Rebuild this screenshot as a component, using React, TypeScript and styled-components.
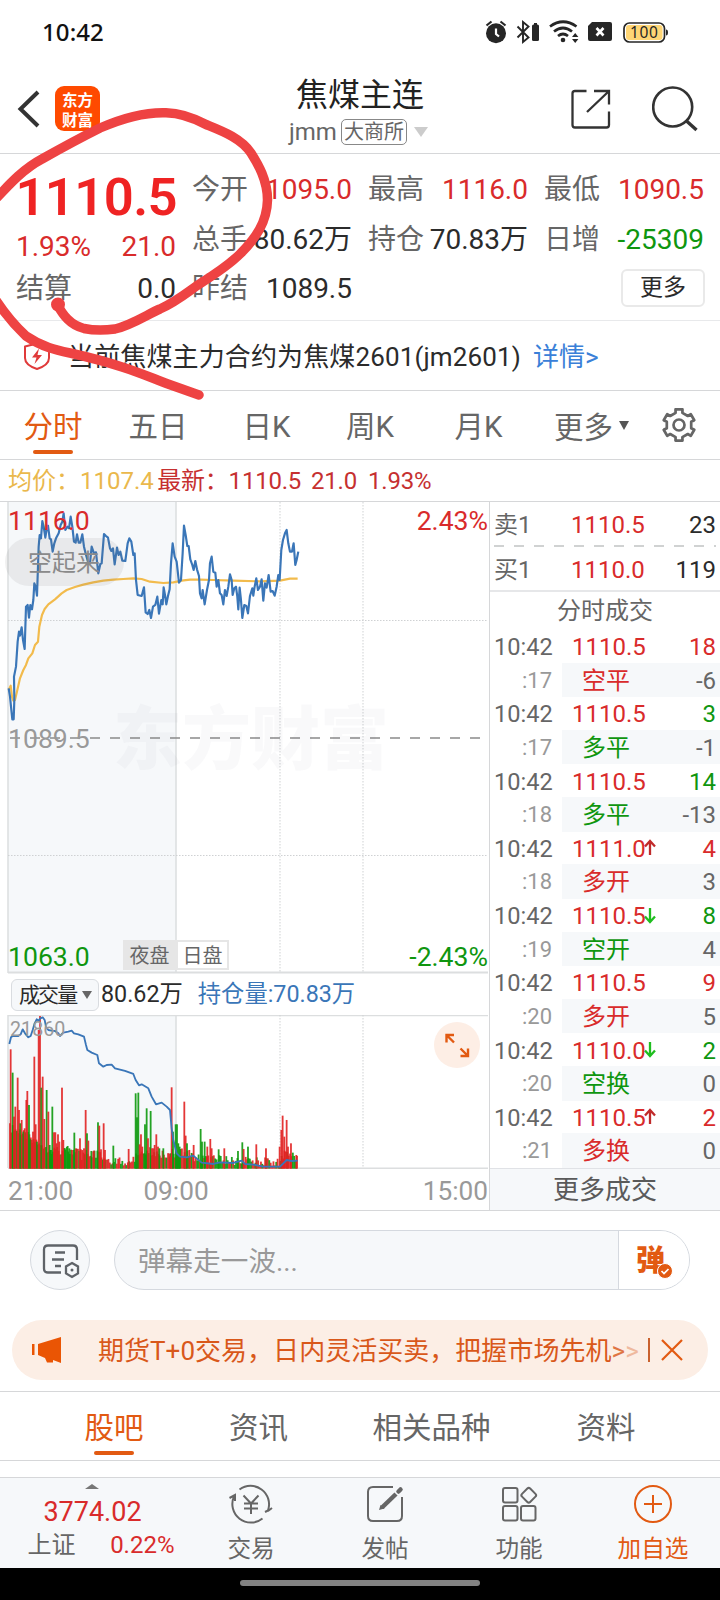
import React from 'react';
import styled, { createGlobalStyle, css } from 'styled-components';

const RED = '#d92b2b';
const GREEN = '#0f960f';
const BLUE = '#3a76b8';
const ORANGE = '#e25a12';
const GREY = '#666';
const MUTED = '#999';
const INK = '#2b2b2b';
const LINE = '#d6d7d9';
const PANEL = '#f6f8fa';

const Global = createGlobalStyle`
  * { box-sizing: border-box; }
  body { margin: 0; background: #fff; }
  #root { font-family: Roboto, "Noto Sans CJK SC", sans-serif; color: ${INK}; }
`;

const Screen = styled.div`
  position: relative;
  width: 720px;
  height: 1600px;
  overflow: hidden;
  background: #fff;
  display: flex;
  flex-direction: column;
  white-space: nowrap;
`;

/* ---------- status bar ---------- */
const StatusBar = styled.div`
  height: 64px;
  flex: none;
  display: flex;
  align-items: center;
  justify-content: space-between;
  padding: 0 50px 0 42px;
`;
const Clock = styled.span`
  font: 500 24px/30px "Noto Sans", sans-serif;
  color: #111;
  letter-spacing: 0.1px;
`;

/* ---------- header ---------- */
const Header = styled.header`
  height: 90px;
  flex: none;
  display: grid;
  grid-template-columns: 280px 160px 280px;
  border-bottom: 1px solid ${LINE};
`;
const HeaderLeft = styled.div`
  display: flex;
  align-items: flex-start;
  padding: 22px 0 0 16px;
  gap: 13px;
`;
const Logo = styled.div`
  width: 45px;
  height: 45px;
  border-radius: 9px;
  background: #ff4a00;
  color: #fff;
  display: flex;
  flex-direction: column;
  align-items: center;
  padding-top: 3px;
`;
const LogoLine = styled.span`
  font: 700 15.5px/20px "Noto Sans CJK SC", sans-serif;
  height: 19.5px;
`;
const Titles = styled.div`
  display: flex;
  flex-direction: column;
  align-items: center;
`;
const Title = styled.h1`
  margin: 11px 0 0;
  font-weight: 400;
  font-size: 32px;
  line-height: 40px;
  color: #222;
`;
const SubTitle = styled.div`
  display: flex;
  align-items: center;
  height: 28px;
  margin-top: 3px;
  font-size: 24px;
  line-height: 30px;
  color: ${GREY};
  margin-left: -3px;
`;
const Exchange = styled.span`
  height: 26px;
  width: 66px;
  text-align: center;
  margin: 0 7px 0 4px;
  border: 1.5px solid #888;
  border-radius: 5px;
  font-size: 20px;
  line-height: 25px;
`;
const HeaderRight = styled.div`
  display: flex;
  justify-content: flex-end;
  align-items: flex-start;
  gap: 39px;
  padding: 21px 20px 0 0;
`;

/* ---------- quote ---------- */
const Quote = styled.section`
  height: 167px;
  flex: none;
  display: grid;
  grid-template-columns: repeat(4, 160px);
  column-gap: 16px;
  padding: 11px 16px 0;
  border-bottom: 1px solid #e8e9eb;
`;
const QuoteCol = styled.div`
  display: flex;
  flex-direction: column;
`;
const QuoteRow = styled.div`
  height: 49.7px;
  display: flex;
  justify-content: space-between;
  align-items: center;
  font-size: 28px;
  line-height: 50px;
`;
const Label = styled.span`
  color: ${GREY};
`;
const Value = styled.span<{ $c?: string }>`
  color: ${(p) => p.$c || INK};
`;
const BigPrice = styled.div`
  height: 65px;
  font-size: 52.6px;
  font-weight: 600;
  letter-spacing: -0.6px;
  line-height: 65px;
  color: #ef2323;
  display: flex;
  justify-content: flex-end;
  margin-right: -1px;
`;
const ChangeRow = styled(QuoteRow)`
  height: 34.4px;
`;
const MoreButton = styled.button`
  width: 84px;
  height: 38px;
  margin: 5px -1px 0 auto;
  padding: 0;
  border: 2px solid #e9e9e9;
  border-radius: 6px;
  background: #fff;
  color: ${INK};
  font: 23px/32px Roboto, "Noto Sans CJK SC", sans-serif;
`;

/* ---------- notice ---------- */
const Notice = styled.section`
  height: 70px;
  flex: none;
  display: flex;
  align-items: center;
  padding-left: 23px;
  font-size: 26px;
  line-height: 72px;
  border-bottom: 1px solid ${LINE};
`;
const NoticeText = styled.span`
  margin-left: 17px;
  padding-top: 2px;
  letter-spacing: 0.13px;
`;
const DetailLink = styled.a`
  margin-left: 12px;
  padding-top: 2px;
  color: #3a80d8;
`;

/* ---------- tabs ---------- */
const TabBar = styled.nav<{ $cols: string }>`
  height: 69px;
  flex: none;
  display: grid;
  grid-template-columns: ${(p) => p.$cols};
  border-bottom: 1px solid ${LINE};
`;
const Tab = styled.div<{ $on?: boolean }>`
  display: flex;
  flex-direction: column;
  align-items: center;
  font-size: 29.5px;
  line-height: 58px;
  padding-top: 7px;
  height: 68px;
  color: ${(p) => (p.$on ? ORANGE : GREY)};
  ${(p) =>
    p.$on &&
    css`
      &::after {
        content: '';
        width: 40px;
        height: 4px;
        margin-top: -6px;
        border-radius: 2px;
        background: ${ORANGE};
      }
    `}
`;
const MoreTab = styled(Tab)`
  flex-direction: row;
  align-items: center;
  padding: 5px 0 0 14px;
  gap: 6px;
  & > svg { margin-top: -4px; }
`;
const IconCell = styled.div`
  display: flex;
  align-items: center;
`;

/* ---------- summary line ---------- */
const Summary = styled.div`
  height: 42px;
  flex: none;
  display: flex;
  padding-left: 8px;
  font-size: 24px;
  line-height: 42px;
  color: #c63030;
  border-bottom: 1px solid ${LINE};
`;
const SummaryItem = styled.span<{ $c?: string; $gap?: number }>`
  color: ${(p) => p.$c || 'inherit'};
  margin-left: ${(p) => p.$gap || 0}px;
  letter-spacing: ${(p) => (p.$c ? 0 : -0.22)}px;
`;

/* ---------- chart area ---------- */
const Market = styled.section`
  height: 709px;
  flex: none;
  display: grid;
  grid-template-columns: 489px 231px;
  grid-template-rows: 708px;
  border-bottom: 1px solid ${LINE};
`;
const ChartCol = styled.div`
  display: flex;
  flex-direction: column;
`;
const PriceChart = styled.div`
  position: relative;
  height: 472px;
`;
const VolumeChart = styled.div`
  position: relative;
  height: 154px;
`;
const Overlay = styled.span<{ $x?: number; $r?: number; $y: number; $c: string; $s?: number }>`
  position: absolute;
  ${(p) => (p.$r !== undefined ? `right: ${p.$r}px;` : `left: ${p.$x}px;`)}
  top: ${(p) => p.$y}px;
  font-size: ${(p) => p.$s || 26.6}px;
  line-height: 30px;
  color: ${(p) => p.$c};
`;
const Watermark = styled.span`
  position: absolute;
  left: 113px;
  top: 182px;
  font: 900 69px/100px "Noto Sans CJK SC", sans-serif;
  color: rgba(80, 90, 110, 0.035);
`;
const BarragePill = styled.span`
  position: absolute;
  left: 5px;
  top: 36px;
  width: 119px;
  height: 48px;
  border-radius: 24px;
  background: rgba(110, 110, 110, 0.1);
  color: #8a8a8a;
  font-size: 24px;
  line-height: 51px;
  padding-left: 23px;
`;
const Sessions = styled.div`
  position: absolute;
  left: 123px;
  top: 438px;
  display: flex;
`;
const Session = styled.span<{ $fill?: boolean }>`
  width: 53px;
  height: 30px;
  text-align: center;
  font-size: 20px;
  line-height: 28px;
  color: ${GREY};
  border: 2px solid #e6e6e6;
  background: ${(p) => (p.$fill ? '#e6e6e6' : '#fff')};
`;
const VolumeHead = styled.div`
  height: 41px;
  display: flex;
  align-items: center;
  padding-left: 11px;
  font-size: 23.3px;
  line-height: 38px;
`;
const Picker = styled.div`
  width: 88px;
  height: 32px;
  display: flex;
  align-items: center;
  justify-content: space-between;
  padding: 0 6px 0 7px;
  border: 1.5px solid #d9dce0;
  border-radius: 6px;
  background: ${PANEL};
  font-size: 21px;
  letter-spacing: -1.9px;
`;
const VolumeText = styled.span<{ $c?: string; $gap: number }>`
  margin-left: ${(p) => p.$gap}px;
  padding-bottom: 2px;
  color: ${(p) => p.$c || INK};
`;
const TimeAxis = styled.div`
  height: 41px;
  display: grid;
  grid-template-columns: 88px 160px 1fr;
  padding: 0 1px 0 8px;
  font-size: 26.2px;
  line-height: 44px;
  color: ${MUTED};
  & > :nth-child(2) { text-align: center; }
  & > :nth-child(3) { text-align: right; }
`;
const ExpandButton = styled.div`
  position: absolute;
  left: 434px;
  top: 7px;
  width: 46px;
  height: 46px;
  border-radius: 50%;
  background: #fdeee5;
`;

/* ---------- order book and trades ---------- */
const BookCol = styled.aside`
  border-left: 1px solid ${LINE};
  display: flex;
  flex-direction: column;
  font-size: 24px;
`;
const BookRow = styled.div`
  height: 43px;
  display: grid;
  grid-template-columns: 77px 1fr auto;
  padding: 0 4px;
  line-height: 46px;
`;
const Dash = styled.div`
  height: 2px;
  margin: 0 4px;
  background: repeating-linear-gradient(90deg, #d0d2d2 0 10px, transparent 10px 20px);
`;
const BookTitle = styled.div`
  height: 40px;
  border-top: 2px solid #e6e7e9;
  text-align: center;
  line-height: 38px;
  color: ${GREY};
`;
const Trade = styled.div`
  height: 67.25px;
  display: grid;
  grid-template-columns: 72px 1fr;
  grid-template-rows: 32.65px 34.6px;
  line-height: 34px;
`;
const TradeTime = styled.span`
  padding-left: 4px;
  font-size: 23.6px;
  line-height: 34px;
  color: ${GREY};
`;
const TradeSecond = styled.span`
  padding-right: 10px;
  text-align: right;
  font-size: 22px;
  line-height: 35px;
  color: ${MUTED};
`;
const TradePrice = styled.span`
  display: flex;
  align-items: center;
  height: 34px;
  padding: 0 4px 0 10px;
  color: ${RED};
`;
const TradeKind = styled.span<{ $c: string }>`
  display: flex;
  justify-content: space-between;
  line-height: 36px;
  padding: 0 4px 0 20px;
  background: ${PANEL};
  color: ${(p) => p.$c};
`;
const Count = styled.span<{ $c: string }>`
  margin-left: auto;
  color: ${(p) => p.$c};
`;
const MoreTrades = styled.div`
  flex: 1;
  border-top: 1px solid #e0e2e6;
  background: ${PANEL};
  text-align: center;
  font-size: 26px;
  line-height: 39px;
  padding-top: 2px;
  color: #5a5a5a;
`;

/* ---------- barrage ---------- */
const Barrage = styled.section`
  height: 109px;
  flex: none;
  display: flex;
  padding: 19px 30px 0;
  gap: 24px;
`;
const RoundButton = styled.div`
  width: 60px;
  height: 60px;
  border: 1px solid #d5d9df;
  border-radius: 50%;
  background: ${PANEL};
`;
const BarrageInput = styled.div`
  width: 576px;
  height: 60px;
  display: flex;
  border: 1px solid #d5d9df;
  border-radius: 30px;
  overflow: hidden;
  background: ${PANEL};
`;
const Placeholder = styled.span`
  flex: 1;
  padding-left: 23px;
  font-size: 27.6px;
  line-height: 62px;
  color: ${MUTED};
`;
const BarrageToggle = styled.span`
  position: relative;
  width: 71px;
  border-left: 1px solid #d5d9df;
  background: #fff;
  color: ${ORANGE};
  font: 900 29px/55px "Noto Sans CJK SC", sans-serif;
  padding-left: 17px;
`;
const CheckBadge = styled.svg`
  position: absolute;
  left: 38px;
  top: 32px;
`;

/* ---------- banner ---------- */
const Banner = styled.section`
  height: 60px;
  flex: none;
  display: flex;
  align-items: center;
  margin: 0 12px 11px;
  padding: 0 25px 0 18px;
  border-radius: 30px;
  background: #fceee5;
  color: #d9581a;
  font-size: 26px;
  line-height: 62px;
`;
const BannerText = styled.span`
  margin-left: 34px;
  width: 542px;
  letter-spacing: 0.03px;
  padding-top: 1px;
`;
const Fade = styled.span<{ $o: number }>`
  opacity: ${(p) => p.$o};
`;
const BannerDivider = styled.span`
  width: 1.5px;
  height: 24px;
  margin: 0 11px 0 8px;
  background: #c9612e;
`;

/* ---------- bottom ---------- */
const LowerTabs = styled(TabBar)`
  height: 70px;
  border-top: 1px solid ${LINE};
`;
const BottomNav = styled.nav`
  height: 91px;
  flex: none;
  margin-top: 16px;
  display: grid;
  grid-template-columns: 184px 134px 134px 134px 134px;
  border-top: 1px solid ${LINE};
  background: ${PANEL};
`;
const IndexCell = styled.div`
  display: flex;
  flex-direction: column;
  align-items: center;
  color: ${RED};
`;
const Caret = styled.svg`
  margin-top: 6px;
`;
const IndexValue = styled.div`
  font-size: 27px;
  line-height: 34px;
  margin: 6px 0 0 1px;
`;
const IndexChange = styled.div`
  display: flex;
  justify-content: space-between;
  width: 147px;
  margin: 0 0 0 18px;
  font-size: 24px;
  line-height: 33px;
`;
const NavItem = styled.div<{ $c?: string }>`
  display: flex;
  flex-direction: column;
  align-items: center;
  padding-top: 4px;
  font-size: 23.6px;
  line-height: 46px;
  color: ${(p) => p.$c || GREY};
`;
const GestureBar = styled.div`
  height: 32px;
  flex: none;
  background: #000;
  display: flex;
  justify-content: center;
  padding-top: 12px;
  &::after {
    content: '';
    width: 240px;
    height: 6px;
    border-radius: 3px;
    background: #828282;
  }
`;
const Marker = styled.svg`
  position: absolute;
  left: 0;
  top: 0;
  pointer-events: none;
`;

/* Price and open-interest series, in thirds of a pixel. */
const PRICE =
  '26,595 30,620 33,650 37,688 41,688 43,630 42,560 48,530 53,455 57,425 60,437 65,412 69,450 74,477 78,350 83,345 87,383 91,345 96,358 100,330 103,280 107,290 111,317 116,170 119,135 123,145 127,93 131,110 136,143 140,118 144,107 149,145 153,148 158,185 163,160 168,145 176,130 182,105 187,95 191,70 196,120 202,110 207,115 212,80 217,110 222,155 227,158 231,133 236,158 241,158 247,133 252,170 258,195 264,215 270,220 275,170 282,190 288,187 295,250 301,222 305,220 312,132 318,138 324,143 330,175 334,183 339,175 344,223 351,173 356,195 361,185 367,212 376,213 383,160 388,145 394,155 400,195 404,190 408,270 413,315 425,318 432,292 437,367 443,372 448,360 453,384 459,350 466,345 472,320 477,371 484,330 488,343 491,292 495,315 499,343 504,318 509,298 513,220 518,160 524,200 530,215 537,278 543,270 548,190 552,107 557,135 562,168 566,168 571,208 577,225 581,240 586,213 591,238 597,258 600,310 605,325 608,300 614,343 621,300 627,270 630,220 635,200 640,245 646,248 650,290 655,270 660,310 665,315 670,343 675,300 680,318 685,290 690,253 695,270 698,315 703,295 708,290 712,320 715,358 719,293 723,330 727,384 733,345 739,348 744,370 750,318 757,295 760,317 764,290 769,265 774,300 780,290 785,268 790,332 795,280 800,293 806,255 812,305 818,303 824,317 830,290 835,255 839,270 844,180 849,150 855,130 860,120 865,160 870,185 876,185 881,160 886,225 890,210 895,185';
const AVERAGE =
  '26,600 32,587 36,620 40,632 45,630 52,600 60,565 70,540 78,525 85,505 97,490 105,465 114,455 118,410 126,375 134,357 145,343 165,328 185,310 200,300 225,291 250,284 280,277 310,272 340,269 370,267 400,265 425,267 450,275 490,279 520,277 545,272 570,269 600,269 640,270 700,272 780,274 840,272 870,266 893,266';
const INTEREST =
  '28,342 33,322 38,318 55,318 62,313 68,298 75,310 85,322 92,318 98,300 104,280 110,268 116,272 121,265 128,262 134,270 138,290 145,300 155,302 165,303 175,310 180,318 190,308 205,305 215,302 222,310 235,313 252,320 258,345 262,360 275,368 292,375 297,400 310,410 320,405 335,404 345,415 375,423 400,432 407,450 417,466 425,463 445,475 455,500 468,523 485,518 500,530 510,540 515,595 520,630 530,670 540,680 560,682 580,677 605,698 640,702 660,697 700,699 725,692 735,702 760,704 790,710 840,710 850,700 860,690 875,693 893,692';

const SPIKES =
  'r32,358 g38,428 r42,560 r46,530 r53,443 r57,540 g61,580 r65,570 g70,605 r74,595 r79,510 r82,483 g87,525 g91,628 r95,630 r99,605 r103,380 r107,583 g111,635 r116,300 r120,258 g124,473 r128,440 r133,567 g140,480 r145,545 g149,645 g153,660 g157,530 r162,607 r166,607 r170,640 r174,613 r178,635 r186,473 r190,630 g195,655 g203,648 g208,655 r216,660 g223,608 r228,655 r240,625 r245,690 r252,655 r257,540 g261,610 r265,632 g274,663 r282,662 g294,577 r298,587 r303,658 r311,580 r315,660 g340,647 r386,657 g407,490 g411,562 g415,488 r419,643 r423,613 r427,650 g435,583 g440,535 r444,625 g452,543 r456,655 r460,655 r464,645 r469,613 r474,650 g478,655 g490,655 r510,680 r515,472 g519,605 g527,583 g531,583 g535,640 g539,650 r553,515 r557,617 g561,640 r568,660 r581,645 g602,597 g606,635 g614,635 r622,650 r631,627 r635,655 g656,658 r673,655 g714,663 g727,637 r731,657 g744,650 r769,643 r798,655 r839,650 r844,600 r848,557 r853,620 r860,570 r864,650 r873,640 r889,675';
const spikes = SPIKES.split(' ').map((s) => {
  const [x, y] = s.slice(1).split(',').map(Number);
  return { x, y, up: s[0] === 'r' };
});

const FLOOR: [number, number][] = [
  [28, 590], [90, 620], [150, 655], [200, 660], [290, 672], [350, 693], [400, 690], [425, 655],
  [480, 668], [540, 665], [600, 682], [700, 690], [835, 695], [860, 660], [896, 690],
];
const floorAt = (x: number) => {
  const i = Math.max(1, FLOOR.findIndex((p) => p[0] >= x));
  const [x0, y0] = FLOOR[i - 1];
  const [x1, y1] = FLOOR[i];
  return y0 + ((y1 - y0) * (x - x0)) / (x1 - x0);
};
const floorBars = Array.from({ length: 208 }, (_, i) => {
  const x = 30 + i * 4.16;
  const n = Math.abs(Math.sin(i * 12.9898) * 43758.5453) % 1;
  const m = Math.abs(Math.sin(i * 78.233) * 12543.123) % 1;
  const upShare = x > 190 && x < 240 ? 0.3 : x > 520 && x < 620 ? 0.35 : 0.6;
  return { x, y: floorAt(x) + (n - 0.4) * 28, up: m < upShare };
});
const bars = [...floorBars, ...spikes];

const trades: [string, string, string, string, boolean, string, boolean, string][] = [
  ['17', '1110.5', '', '18', true, '空平', true, '-6'],
  ['17', '1110.5', '', '3', false, '多平', false, '-1'],
  ['18', '1110.5', '', '14', false, '多平', false, '-13'],
  ['18', '1111.0', 'up', '4', true, '多开', true, '3'],
  ['19', '1110.5', 'down', '8', false, '空开', false, '4'],
  ['20', '1110.5', '', '9', true, '多开', true, '5'],
  ['20', '1110.0', 'down', '2', false, '空换', false, '0'],
  ['21', '1110.5', 'up', '2', true, '多换', true, '0'],
];

const ArrowIcon = styled.svg`
  margin: -2px 0 0 -2px;
`;
const Arrow = ({ dir }: { dir: string }) =>
  dir ? (
    <ArrowIcon width="12" height="17" viewBox="0 0 12 17" fill="none" strokeWidth="2.300"
      stroke={dir === 'up' ? '#c02a2a' : '#1fbe1f'}>
      <path d={dir === 'up' ? 'M6 16V2M1 7.500 6 2l5 5.500' : 'M6 1v14M1 9.500 6 15l5-5.500'} />
    </ArrowIcon>
  ) : null;

const Triangle = ({ w, h, c }: { w: number; h: number; c: string }) => (
  <svg width={w} height={h} viewBox="0 0 10 10" preserveAspectRatio="none">
    <path d="M0 0h10L5 10z" fill={c} />
  </svg>
);

const StatusGlyphs = () => (
  <svg width="186" height="26" viewBox="484 19 186 26" fill="#262626">
    <circle cx="496" cy="33.300" r="10" />
    <path d="M486.500 25.500l5-4M505.500 25.500l-5-4" stroke="#262626" strokeWidth="2.200" />
    <path d="M496 28.500v5.500l3 2.500" stroke="#fff" strokeWidth="2.200" fill="none" />
    <path d="M517.500 26.500l11 11-5.500 4.500V22l5.500 4.500-11 11" fill="none" stroke="#262626" strokeWidth="1.900" />
    <rect x="532" y="24.500" width="7" height="16.500" rx="1.500" />
    <rect x="534" y="23" width="3" height="3" />
    <g fill="none" stroke="#262626" strokeWidth="2.700">
      <path d="M550 26.500q13-9.500 26.500 0" />
      <path d="M554 31.500q9-7 18 0" />
      <path d="M558 36q5-4 10 0" />
    </g>
    <circle cx="563" cy="40" r="2.300" />
    <path d="M572 37l3.200-4 3.200 4zM572 39l3.200 4 3.200-4z" />
    <path d="M592 22h18q2 0 2 2v15q0 2-2 2h-20q-2 0-2-2V26z" />
    <path d="M596.500 28l7 7.500M603.500 28l-7 7.500" stroke="#fff" strokeWidth="2.600" />
    <rect x="624" y="23" width="40.500" height="19" rx="5.500" fill="#fff" stroke="#262626" strokeWidth="1.700" />
    <rect x="626" y="25" width="36.500" height="15" rx="3" fill="#ffd675" />
    <path d="M666 29.500q2 0 2 3t-2 3z" />
    <text x="644.300" y="38" fontFamily="Noto Sans, sans-serif" fontSize="15.500" letterSpacing="0.700" textAnchor="middle">100</text>
  </svg>
);

const gearPath = (() => {
  const pts: string[] = [];
  for (let i = 0; i < 6; i++) {
    const a = (i * Math.PI) / 3 - Math.PI / 2;
    [[-0.27, 12.6], [-0.22, 16], [0.22, 16], [0.27, 12.6]].forEach(([d, r]) =>
      pts.push(`${(18 + r * Math.cos(a + d)).toFixed(1)} ${(18 + r * Math.sin(a + d)).toFixed(1)}`),
    );
  }
  return `M${pts.join('L')}Z`;
})();

export default function App() {
  return (
    <Screen>
      <Global />
      <StatusBar>
        <Clock>10:42</Clock>
        <StatusGlyphs />
      </StatusBar>

      <Header>
        <HeaderLeft>
          <svg width="26" height="46" viewBox="16 86 26 46" fill="none" stroke="#333" strokeWidth="4">
            <path d="M38 92 20.500 109 38 126" />
          </svg>
          <Logo><LogoLine>东方</LogoLine><LogoLine>财富</LogoLine></Logo>
        </HeaderLeft>
        <Titles>
          <Title>焦煤主连</Title>
          <SubTitle>
            jmm<Exchange>大商所</Exchange>
            <Triangle w={14} h={10} c="#ccc" />
          </SubTitle>
        </Titles>
        <HeaderRight>
          <svg width="46" height="48" viewBox="568 85 46 48" fill="none" stroke="#333" strokeWidth="2.300">
            <path d="M587.500 91H576q-2.500 0-2.500 2.500v31.500q0 2.500 2.500 2.500h31.500q2.500 0 2.500-2.500v-13.500M595 91h15v13.500M609.500 91.500 588 112" />
          </svg>
          <svg width="48" height="48" viewBox="652 85 48 48" fill="none" stroke="#333">
            <circle cx="672.700" cy="107" r="19.500" strokeWidth="2.600" />
            <path d="M686 120.500l10.500 9.500" strokeWidth="3.400" />
          </svg>
        </HeaderRight>
      </Header>

      <Quote>
        <QuoteCol>
          <BigPrice>1110.5</BigPrice>
          <ChangeRow><Value $c={RED}>1.93%</Value><Value $c={RED}>21.0</Value></ChangeRow>
          <QuoteRow><Label>结算</Label><Value>0.0</Value></QuoteRow>
        </QuoteCol>
        <QuoteCol>
          <QuoteRow><Label>今开</Label><Value $c={RED}>1095.0</Value></QuoteRow>
          <QuoteRow><Label>总手</Label><Value>80.62万</Value></QuoteRow>
          <QuoteRow><Label>昨结</Label><Value>1089.5</Value></QuoteRow>
        </QuoteCol>
        <QuoteCol>
          <QuoteRow><Label>最高</Label><Value $c={RED}>1116.0</Value></QuoteRow>
          <QuoteRow><Label>持仓</Label><Value>70.83万</Value></QuoteRow>
        </QuoteCol>
        <QuoteCol>
          <QuoteRow><Label>最低</Label><Value $c={RED}>1090.5</Value></QuoteRow>
          <QuoteRow><Label>日增</Label><Value $c={GREEN}>-25309</Value></QuoteRow>
          <MoreButton>更多</MoreButton>
        </QuoteCol>
      </Quote>

      <Notice>
        <svg width="28" height="30" viewBox="0 0 28 30" fill="none" stroke="#e03a3a" strokeWidth="2">
          <path d="M14 2.500 26 5.500V17c0 5-6 9-12 11C8 26 2 22 2 17V5.500z" strokeLinejoin="round" />
          <path d="M16 7.500l-7 9h4.500l-2 6.500 7.500-9h-4.500z" fill="#e03a3a" stroke="none" />
        </svg>
        <NoticeText>当前焦煤主力合约为焦煤2601(jm2601)</NoticeText>
        <DetailLink>详情&gt;</DetailLink>
      </Notice>

      <TabBar $cols="106px 104px 113px 94px 123px 121px 59px">
        <Tab $on>分时</Tab>
        <Tab>五日</Tab>
        <Tab>日K</Tab>
        <Tab>周K</Tab>
        <Tab>月K</Tab>
        <MoreTab>更多<Triangle w={10} h={9} c="#555" /></MoreTab>
        <IconCell>
          <svg width="36" height="36" viewBox="0 0 36 36" fill="none" stroke="#666" strokeWidth="2.700" strokeLinejoin="round">
            <path d={gearPath} />
            <circle cx="18" cy="18" r="5.500" />
          </svg>
        </IconCell>
      </TabBar>

      <Summary>
        <SummaryItem $c="#eab84c">均价：1107.4</SummaryItem>
        <SummaryItem $gap={3.5}>最新：1110.5</SummaryItem>
        <SummaryItem $gap={10}>21.0</SummaryItem>
        <SummaryItem $gap={11}>1.93%</SummaryItem>
      </Summary>

      <Market>
        <ChartCol>
          <PriceChart>
            <svg width="489" height="472" viewBox="0 0 489 472" fill="none" style={{ display: 'block' }}>
              <rect x="8" y="0" width="168" height="470" fill={PANEL} />
              <g stroke="#dcdedf" strokeWidth="1.500">
                <path d="M8 0V471M176 0V471" />
                <path d="M8 470.500H488" strokeWidth="2" />
              </g>
              <path d="M280 0V470M363 0V470M8 118.500H488M8 353.500H488" stroke="#cfd1d3" strokeDasharray="1.500 1.500" />
              <path d="M10 236H480" stroke="#8a8a8a" strokeWidth="1.600" strokeDasharray="10 10" />
              <g transform="translate(0 -12) scale(0.3333)" strokeLinejoin="round">
                <polyline points={AVERAGE} stroke="#f2bb4c" strokeWidth="6.500" />
                <polyline points={PRICE} stroke={BLUE} strokeWidth="6.500" />
              </g>
            </svg>
            <Watermark>东方财富</Watermark>
            <BarragePill>空起来</BarragePill>
            <Overlay $x={8} $y={4} $c={RED}>1116.0</Overlay>
            <Overlay $r={1} $y={4} $c={RED}>2.43%</Overlay>
            <Overlay $x={8} $y={222} $c={MUTED}>1089.5</Overlay>
            <Overlay $x={8} $y={440} $c={GREEN}>1063.0</Overlay>
            <Overlay $r={1} $y={440} $c={GREEN}>-2.43%</Overlay>
            <Sessions><Session $fill>夜盘</Session><Session>日盘</Session></Sessions>
          </PriceChart>
          <VolumeHead>
            <Picker>成交量<Triangle w={10} h={8} c="#666" /></Picker>
            <VolumeText $gap={2}>80.62万</VolumeText>
            <VolumeText $gap={15} $c={BLUE}>持仓量:70.83万</VolumeText>
          </VolumeHead>
          <VolumeChart>
            <svg width="489" height="154" viewBox="0 0 489 154" fill="none" style={{ display: 'block' }}>
              <rect x="8" y="0" width="168" height="153" fill={PANEL} />
              <path d="M8 .5H488M8 0V153M176 0V153" stroke="#dcdedf" strokeWidth="1.500" />
              <path d="M8 153.500H488" stroke="#dcdedf" strokeWidth="2" />
              <path d="M280 0V153M363 0V153" stroke="#cfd1d3" strokeDasharray="1.500 1.500" />
              <g transform="translate(0 -85) scale(0.3333)">
                {bars.map((b, i) => (
                  <rect key={i} x={b.x - 2.7} y={b.y} width="5.400" height={716 - b.y}
                    fill={b.up ? '#e12121' : '#0c990c'} fillOpacity={0.9} />
                ))}
                <polyline points={INTEREST} stroke={BLUE} strokeWidth="5.500" strokeLinejoin="round" />
              </g>
            </svg>
            <Overlay $x={10} $y={0} $c="#9a9a9a" $s={19.7}>21860</Overlay>
            <ExpandButton>
              <svg width="46" height="46" viewBox="0 0 46 46" fill="none" stroke={ORANGE} strokeWidth="2.400">
                <path d="M12.500 20.500v-7.500H20M12.500 13l7.500 7.500M34 26.500V34H26.500M34 34l-7.500-7.500" />
              </svg>
            </ExpandButton>
          </VolumeChart>
          <TimeAxis><span>21:00</span><span>09:00</span><span>15:00</span></TimeAxis>
        </ChartCol>

        <BookCol>
          <BookRow><Label>卖1</Label><Value $c={RED}>1110.5</Value><Value>23</Value></BookRow>
          <Dash />
          <BookRow><Label>买1</Label><Value $c={RED}>1110.0</Value><Value>119</Value></BookRow>
          <BookTitle>分时成交</BookTitle>
          {trades.map(([sec, price, dir, qty, qUp, kind, kUp, delta], i) => (
            <Trade key={i}>
              <TradeTime>10:42</TradeTime>
              <TradePrice>{price}<Arrow dir={dir} /><Count $c={qUp ? RED : GREEN}>{qty}</Count></TradePrice>
              <TradeSecond>:{sec}</TradeSecond>
              <TradeKind $c={kUp ? RED : GREEN}>{kind}<Count $c={GREY}>{delta}</Count></TradeKind>
            </Trade>
          ))}
          <MoreTrades>更多成交</MoreTrades>
        </BookCol>
      </Market>

      <Barrage>
        <RoundButton>
          <svg width="58" height="58" viewBox="0 0 58 58" fill="none" stroke="#5f6368" strokeWidth="2.300">
            <path d="M46 29V18.500q0-4-4-4H17q-4 0-4 4v19q0 4 4 4h13M24 21.500h10M21 28.500h12M24 35h6" />
            <path d="M41 32l6 3.400v7L41 46l-6-3.600v-7z" />
            <circle cx="41" cy="39" r="1.500" fill="#5f6368" stroke="none" />
          </svg>
        </RoundButton>
        <BarrageInput>
          <Placeholder>弹幕走一波...</Placeholder>
          <BarrageToggle>
            弹
            <CheckBadge width="16" height="16" viewBox="0 0 16 16">
              <circle cx="8" cy="8" r="7.500" fill={ORANGE} stroke="#fff" />
              <path d="M4.500 8l2.500 2.500 4.500-4.500" fill="none" stroke="#fff" strokeWidth="1.700" />
            </CheckBadge>
          </BarrageToggle>
        </BarrageInput>
      </Barrage>

      <Banner>
        <svg width="34" height="30" viewBox="0 0 34 30" fill="#ea5504">
          <path d="M2 9h2.500v11H2zM8 9 31 2v26l-8-3v2.500h-6L15 23 8 20z" />
        </svg>
        <BannerText>
          期货T+0交易，日内灵活买卖，把握市场先机<Fade $o={0.8}>&gt;</Fade><Fade $o={0.35}>&gt;</Fade>
        </BannerText>
        <BannerDivider />
        <svg width="22" height="22" viewBox="0 0 22 22" stroke={ORANGE} strokeWidth="2.200">
          <path d="M1 1l20 20M21 1 1 21" />
        </svg>
      </Banner>

      <LowerTabs $cols="228px 61px 285px 64px">
        <Tab $on>股吧</Tab>
        <Tab>资讯</Tab>
        <Tab>相关品种</Tab>
        <Tab>资料</Tab>
      </LowerTabs>

      <BottomNav>
        <IndexCell>
          <Caret width="14" height="5" viewBox="0 0 14 5"><path d="M0 5 7 0l7 5z" fill="#777" /></Caret>
          <IndexValue>3774.02</IndexValue>
          <IndexChange><Label>上证</Label><span>0.22%</span></IndexChange>
        </IndexCell>
        <NavItem>
          <svg width="44" height="44" viewBox="0 0 44 44" fill="none" stroke="#666" strokeWidth="2">
            <path d="M10.500 7.500A18.500 18.500 0 0 1 39 28.500M39 28.500l-3 1.500M39 29l4-3M33.500 36.500A18.500 18.500 0 0 1 5 14.500M.5 16l5.500-3v6" />
            <path d="M14.500 13.500l7.500 8 7.500-8M22 21.500V32M15 21.500h14M15 26.500h14" />
          </svg>
          交易
        </NavItem>
        <NavItem>
          <svg width="44" height="44" viewBox="0 0 44 44" fill="none" stroke="#666" strokeWidth="2">
            <path d="M30 5H10q-5 0-5 5v24q0 5 5 5h24q5 0 5-5V15" />
            <path d="M19 25.500 33 12" strokeWidth="4.500" />
            <path d="M35.500 9.500l2-2" strokeWidth="4.500" strokeLinecap="round" />
            <path d="M16 28l1.500-5 4 3.500z" fill="#666" stroke="none" />
          </svg>
          发帖
        </NavItem>
        <NavItem>
          <svg width="44" height="44" viewBox="0 0 44 44" fill="none" stroke="#666" strokeWidth="2">
            <rect x="6" y="6" width="14.500" height="14.500" rx="2" />
            <rect x="6" y="24" width="14.500" height="14.500" rx="2" />
            <rect x="24" y="24" width="14.500" height="14.500" rx="2" />
            <rect x="26" y="7.500" width="11.500" height="11.500" rx="2" transform="rotate(45 31.750 13.250)" />
          </svg>
          功能
        </NavItem>
        <NavItem $c={ORANGE}>
          <svg width="44" height="44" viewBox="0 0 44 44" fill="none" stroke={ORANGE} strokeWidth="2">
            <circle cx="22" cy="22" r="18" />
            <path d="M22 13v18M13 22h18" />
          </svg>
          加自选
        </NavItem>
      </BottomNav>
      <GestureBar />

      <Marker width="720" height="420" viewBox="0 0 720 420" fill="none" stroke="#ee4343" strokeWidth="9.500" strokeLinecap="round">
        <circle cx="58" cy="304.500" r="3" strokeWidth="8" />
        <path d="M57.500 305C63 315 70 325 84 328.500C96 331 108 330 115 329C132 325 148 314 160 309C178 301 190 290 201 283C220 271 232 262 240 254C256 238 267 222 267.500 200C267.500 180 258 164 251 153C241 138 222 131 206 124.500C192 117 180 113 166 112.700C145 112 125 117 100 128C78 139 58 150 42 159C25 168 12 181 -8 203" />
        <path d="M-8 294C2 310 12 323 26 336C42 347 56 350 70 353C88 357 104 361 122 367C138 372 152 378 168 384L199 395" />
      </Marker>
    </Screen>
  );
}
